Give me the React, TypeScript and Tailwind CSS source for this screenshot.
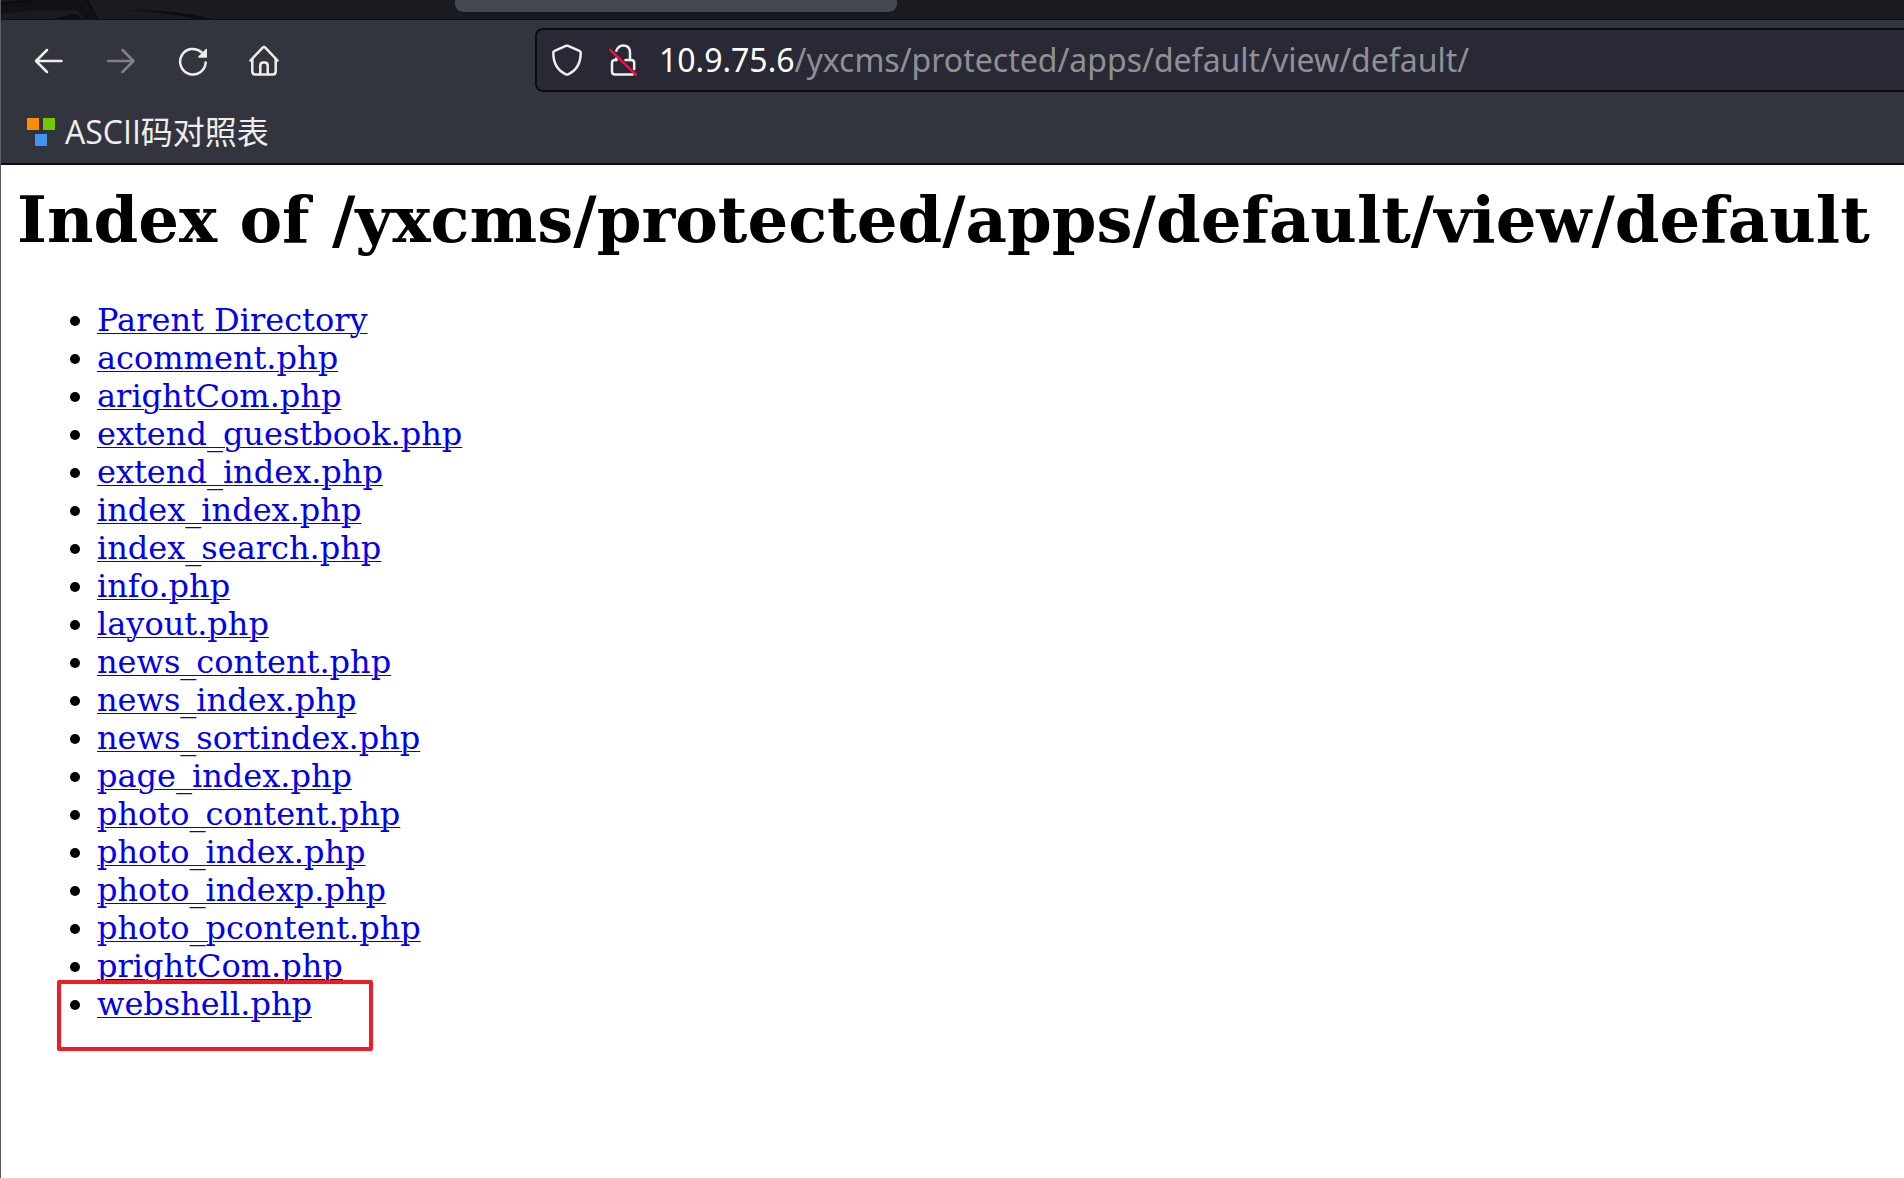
import React from "react";

const files = [
  "Parent Directory",
  "acomment.php",
  "arightCom.php",
  "extend_guestbook.php",
  "extend_index.php",
  "index_index.php",
  "index_search.php",
  "info.php",
  "layout.php",
  "news_content.php",
  "news_index.php",
  "news_sortindex.php",
  "page_index.php",
  "photo_content.php",
  "photo_index.php",
  "photo_indexp.php",
  "photo_pcontent.php",
  "prightCom.php",
  "webshell.php",
];

const stroke = {
  fill: "none",
  stroke: "currentColor",
  strokeWidth: 2.5,
  strokeLinecap: "round" as const,
  strokeLinejoin: "round" as const,
};

function BackIcon() {
  return (
    <svg viewBox="0 0 32 32" className="size-8" {...stroke}>
      <path d="M28.500 16H3M14 5L3 16l11 11" />
    </svg>
  );
}

function ForwardIcon() {
  return (
    <svg viewBox="0 0 32 32" className="size-8" {...stroke}>
      <path d="M3 16H28.500M17.500 5l11 11-11 11" />
    </svg>
  );
}

function ReloadIcon() {
  return (
    <svg viewBox="0 0 32 32" className="size-8" {...stroke}>
      <path d="M28.700 17.500A12.800 12.800 0 1 1 24.500 7.200" />
      <path d="M29.300 4.500v7.500h-7.500z" fill="currentColor" strokeWidth={1.400} />
    </svg>
  );
}

function HomeIcon() {
  return (
    <svg viewBox="1 0 32 32" className="size-8" {...stroke}>
      <path d="M2.500 15.500L14.700 2.600q1.300-1.300 2.600 0L29.500 15.500" />
      <path d="M4.300 14v12.500q0 3 3 3h17.400q3 0 3-3V14" />
      <path d="M12.300 29V20.500q0-3 3-3h1.400q3 0 3 3V29" />
    </svg>
  );
}

function ShieldIcon() {
  return (
    <svg viewBox="0 0 32 32" className="size-8" {...stroke}>
      <path d="M14.900 1.900q1.100-.5 2.200 0L28.400 6.800q1.300.6 1.300 2C29.700 19 25.600 26.400 17.200 30.300q-1.200.5-2.400 0C6.400 26.400 2.300 19 2.300 8.800q0-1.400 1.300-2z" />
    </svg>
  );
}

function InsecureIcon() {
  return (
    <svg viewBox="0 0 32 32" className="size-8" {...stroke}>
      <path d="M9.300 6.800Q11.400 1.500 16 1.500q7 0 7 7v7.500" />
      <path d="M9.200 14.500v1.500M18.500 16h5.700q3 0 3 3v6" />
      <path d="M9.500 16H8q-3 0-3 3v8.500q0 3 3 3h17.500" />
      <path d="M3.300 5.800L28.800 30.700" stroke="#f2113f" />
    </svg>
  );
}

export default function App() {
  return (
    <div className="flex min-h-screen flex-col border-l border-[#5c5c5e] bg-white">
      <header className="border-b-2 border-[#0c0c10] bg-[#33353e] text-[#eeeeea]">
        <div className="relative flex h-5 items-start border-b border-[#0d0e12] bg-[#1a1b20]">
          <svg viewBox="0 0 240 19" className="absolute top-0 left-0 h-[19px] w-60" fill="none">
            <path d="M0 3.500Q15 2 32 0h54l10 19H52L74 14l5 5h4L77 10Q35 9 0 14z" fill="#111216" />
            <path d="M0 3.500Q15 2 32 0" stroke="#0b0c0f" strokeWidth="2" />
            <path d="M86 0l10 19M54 19l21-4 5 4" stroke="#0b0c0f" strokeWidth="2" />
            <path d="M126 10Q175 10 212 19h-16Q165 12 126 10z" fill="#0b0c0f" />
          </svg>
          <div className="ml-[454px] h-3 w-[442px] rounded-b-lg bg-[#45474f] shadow" />
        </div>

        <div className="flex h-20 items-center">
          <nav className="flex w-[534px] shrink-0 items-center gap-10 pt-0.5 pl-8">
            <button type="button" aria-label="Back" className="size-8">
              <BackIcon />
            </button>
            <button type="button" aria-label="Forward" disabled className="size-8 text-[#808187]">
              <ForwardIcon />
            </button>
            <button type="button" aria-label="Reload" className="size-8">
              <ReloadIcon />
            </button>
            <button type="button" aria-label="Home" className="size-8">
              <HomeIcon />
            </button>
          </nav>
          <div className="flex h-16 flex-1 items-center rounded-l-lg border-2 border-r-0 border-[#0c0d11] bg-[#282934] pl-[14px] font-['Noto_Sans',sans-serif] text-[32px] leading-[48px]">
            <button type="button" aria-label="Tracking protection" className="mr-6 size-8">
              <ShieldIcon />
            </button>
            <button type="button" aria-label="Connection is not secure" className="mr-5 size-8">
              <InsecureIcon />
            </button>
            <label htmlFor="address" className="text-white">
              10.9.75.6
            </label>
            <input
              id="address"
              type="text"
              spellCheck={false}
              defaultValue="/yxcms/protected/apps/default/view/default/"
              className="h-12 min-w-0 flex-1 bg-transparent text-[#8f9095] outline-none"
            />
          </div>
        </div>

        <div className="flex h-[63px] items-center pl-[26px]">
          <a
            href="#ascii"
            className="flex items-center gap-[10px] font-['Open_Sans','Noto_Sans_CJK_SC',sans-serif] text-[32px] leading-[48px]"
          >
            <svg viewBox="0 0 28 28" className="size-7">
              <path d="M0 0h12v12H0z" fill="#ff8c00" />
              <path d="M16 0h12v12H16z" fill="#74c800" />
              <path d="M8 16h12v12H8z" fill="#4394f0" />
            </svg>
            <span>ASCII码对照表</span>
          </a>
        </div>
      </header>

      <main className="px-4 pt-4 font-['DejaVu_Serif',serif] text-black">
        <h1 className="text-[64px] leading-[78px] font-bold">
          Index of /yxcms/protected/apps/default/view/default
        </h1>
        <ul className="mt-[42px] list-disc pl-20 text-[32px] leading-[38px]">
          {files.map((name) => (
            <li key={name} className="relative">
              <a
                href={"#" + name}
                className="text-[#0000ee] underline decoration-1 underline-offset-2"
              >
                {name}
              </a>
              {name === "webshell.php" && (
                <span className="pointer-events-none absolute -top-[5px] -left-10 h-[71px] w-[316px] rounded-xs border-4 border-[#ee1c25]" />
              )}
            </li>
          ))}
        </ul>
      </main>
    </div>
  );
}
